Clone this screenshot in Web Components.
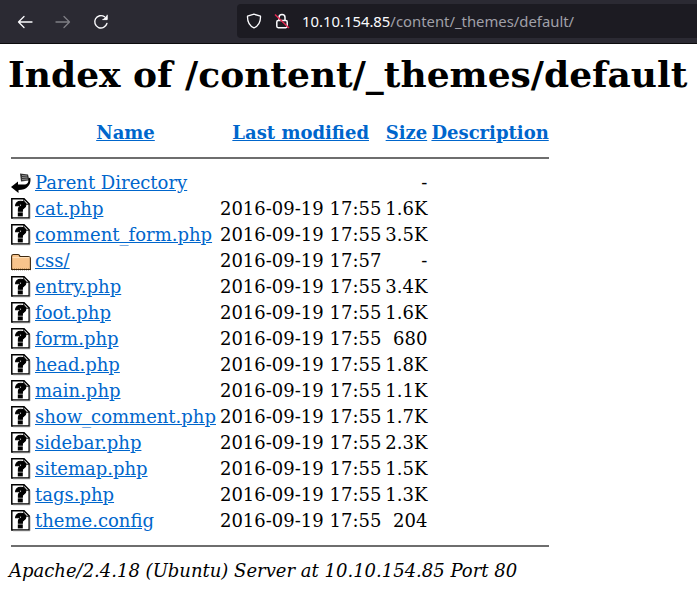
<!DOCTYPE html>
<html><head><meta charset="utf-8"><style>
html,body{margin:0;padding:0;background:#fff;}
body{font:18px/normal "DejaVu Serif",serif;color:#000;overflow:hidden;}
</style></head><body>
<browser-bar host-part="10.10.154.85" path-part="/content/_themes/default/"></browser-bar>
<index-page>
<index-row kind="back" name="Parent Directory" date="" size="-"></index-row>
<index-row name="cat.php" date="2016-09-19 17:55" size="1.6K"></index-row>
<index-row name="comment_form.php" date="2016-09-19 17:55" size="3.5K"></index-row>
<index-row kind="folder" name="css/" date="2016-09-19 17:57" size="-"></index-row>
<index-row name="entry.php" date="2016-09-19 17:55" size="3.4K"></index-row>
<index-row name="foot.php" date="2016-09-19 17:55" size="1.6K"></index-row>
<index-row name="form.php" date="2016-09-19 17:55" size="680"></index-row>
<index-row name="head.php" date="2016-09-19 17:55" size="1.8K"></index-row>
<index-row name="main.php" date="2016-09-19 17:55" size="1.1K"></index-row>
<index-row name="show_comment.php" date="2016-09-19 17:55" size="1.7K"></index-row>
<index-row name="sidebar.php" date="2016-09-19 17:55" size="2.3K"></index-row>
<index-row name="sitemap.php" date="2016-09-19 17:55" size="1.5K"></index-row>
<index-row name="tags.php" date="2016-09-19 17:55" size="1.3K"></index-row>
<index-row name="theme.config" date="2016-09-19 17:55" size="204"></index-row>
</index-page>
<script>
class BrowserBar extends HTMLElement{
  constructor(){super();const s=this.attachShadow({mode:'open'});
  s.innerHTML=`<style>
  :host{display:flex;align-items:center;box-sizing:border-box;height:44px;background:#2b2a33;border-bottom:1px solid #0c0c0d;color:#fbfbfe;font:14.85px "Noto Sans",sans-serif;padding-left:17px}
  .btn{width:16px;height:16px;display:block;flex:none}
  .fw{margin-left:22px;opacity:.4}.re{margin-left:22px}
  .url{margin-left:128px;flex:1;height:34px;margin-top:-1px;background:#1c1b22;border-radius:4px 0 0 4px;display:flex;align-items:center;padding-left:9px;min-width:0;white-space:nowrap}
  .lock{margin-left:12px;margin-right:12px}
  .h{color:#fbfbfe}.p{color:#a0a0a8}
  </style>
  <svg class="btn" viewBox="0 0 16 16" fill="none" stroke="#fbfbfe" stroke-width="1.3" stroke-linecap="round" stroke-linejoin="round"><path d="M15 8H1.5M7 2.5L1.5 8L7 13.5"/></svg>
  <svg class="btn fw" viewBox="0 0 16 16" fill="none" stroke="#fbfbfe" stroke-width="1.3" stroke-linecap="round" stroke-linejoin="round"><path d="M1 8H14.5M9 2.5L14.5 8L9 13.5"/></svg>
  <svg class="btn re" viewBox="0 0 16 16" fill="none" stroke="#fbfbfe" stroke-width="1.4" stroke-linecap="round" stroke-linejoin="round"><path d="M13.9 9.5A6.2 6.2 0 1 1 11.6 2.8"/><path d="M14.2 1.2V5.6H9.8" fill="#fbfbfe" stroke-width="1"/></svg>
  <div class="url">
   <svg class="btn" viewBox="0 0 16 16" fill="none" stroke="#fbfbfe" stroke-width="1.3" stroke-linejoin="round"><path d="M8 1.2L14.5 3.2C14.7 9 12.5 12.8 8 14.8C3.5 12.8 1.3 9 1.5 3.2Z"/></svg>
   <svg class="btn lock" viewBox="0 0 16 16" fill="none"><path d="M5 7V4.5a3 3 0 0 1 6 0V7" stroke="#fbfbfe" stroke-width="1.5"/><rect x="2.8" y="7.5" width="10.4" height="7.2" rx="1.4" stroke="#fbfbfe" stroke-width="1.5"/><path d="M1 1.5L15 15" stroke="#e22850" stroke-width="1.5"/></svg>
   <span><span class="h"></span><span class="p"></span></span>
  </div>`;
  s.querySelector('.h').textContent=this.getAttribute('host-part');
  s.querySelector('.p').textContent=this.getAttribute('path-part');}
}
customElements.define('browser-bar',BrowserBar);

const ICONS={
 file:`<svg width="20" height="22" viewBox="0 0 20 22"><path d="M.8.8H13L18.2 6V20H.8Z" fill="#fff" stroke="#000" stroke-width="1.5"/><path d="M12.8 .8V6.2H18.2Z" fill="#bbb" stroke="#000"/><path d="M2 20.8H19V6.5" fill="none" stroke="#999" stroke-width=".8"/><path d="M4.6 7.8C4.6 4.6 7 3.3 9.6 3.3C12.6 3.3 14.8 4.8 14.8 7.2C14.8 9.8 11.9 10 11.4 11.6V13.2H7.4V11C7.4 8.6 10.7 8.6 10.7 7.1C10.7 6.3 10.2 6 9.6 6C8.9 6 8.5 6.7 8.5 7.8Z" fill="#000" stroke="#000" stroke-width="1.1"/><rect x="6.8" y="14.4" width="5" height="4" fill="#000"/></svg>`,
 back:`<svg width="20" height="22" viewBox="0 0 20 22"><path d="M9 1.5L17 2.5L18.5 8.5L10 9.5Z" fill="#333"/><path d="M11 3.5L16 4M11 5.5L16.5 6M11 7.5L17 8" stroke="#aaa" stroke-width=".8"/><path d="M0 15L7 9.5V12.5H13C16.5 12.5 17.8 10 17.5 6.5L19.2 5.5C20.5 11 17.5 18 7.5 18V21Z" fill="#000"/></svg>`,
 folder:`<svg width="20" height="22" viewBox="0 0 20 22"><path d="M.6 6.5Q.6 4.5 2.5 4.5H7Q8.5 4.5 9 6.5H17Q19.4 6.5 19.4 8.5V19.5H.6Z" fill="#f8c48c" stroke="#3f280e" stroke-width="1.1"/><path d="M1.5 7.6H18.5" stroke="#ffe2bd"/><path d="M1 19.5H19.5" stroke="#3a2408" stroke-width="1.3" stroke-dasharray="1 1"/></svg>`
};
class IndexPage extends HTMLElement{
  constructor(){super();const s=this.attachShadow({mode:'open'});
  s.innerHTML=`<style>
  :host{display:block;padding:0 8px;font:18px "DejaVu Serif",serif}
  h1{font-size:36px;font-weight:bold;margin:0;padding:8px 0 0;line-height:44px;white-space:nowrap}
  .g{display:grid;grid-template-columns:auto auto auto auto auto;justify-content:start;column-gap:4px;margin:23px 0 0 3px}
  .h{font-weight:bold;text-align:center;line-height:26px;padding-top:1px;height:25px;white-space:nowrap}
  a{color:#0066cc;text-decoration:underline}
  .rule{grid-column:1/-1;height:2px;background:#6e6e6e;margin:12px 0 11px}
  slot{display:contents}
  address{font-style:italic;margin-top:12px;margin-left:1px;line-height:24px;white-space:nowrap}
  </style>
  <h1>Index of /content/_themes/default</h1>
  <div class="g">
   <div class="h"></div><div class="h"><a href="#">Name</a></div><div class="h"><a href="#">Last modified</a></div><div class="h"><a href="#">Size</a></div><div class="h"><a href="#">Description</a></div>
   <div class="rule"></div>
   <slot></slot>
   <div class="rule" style="margin:11px 0 0"></div>
  </div>
  <address>Apache/2.4.18 (Ubuntu) Server at 10.10.154.85 Port 80</address>`;}
}
customElements.define('index-page',IndexPage);
class IndexRow extends HTMLElement{
  constructor(){super();const s=this.attachShadow({mode:'open'});
  const k=this.getAttribute('kind')||'file';
  s.innerHTML=`<style>
  :host{display:contents}
  .c{white-space:nowrap;line-height:26px;height:26px}
  .c svg{display:block;margin-top:2px}
  .s{text-align:right}
  a{color:#0066cc;text-decoration:underline}
  </style>
  <div class="c">${ICONS[k]}</div><div class="c"><a href="#"></a></div><div class="c d"></div><div class="c s"></div><div class="c"></div>`;
  s.querySelector('a').textContent=this.getAttribute('name');
  s.querySelector('.d').textContent=this.getAttribute('date');
  s.querySelector('.s').textContent=this.getAttribute('size');}
}
customElements.define('index-row',IndexRow);
</script>
</body></html>
